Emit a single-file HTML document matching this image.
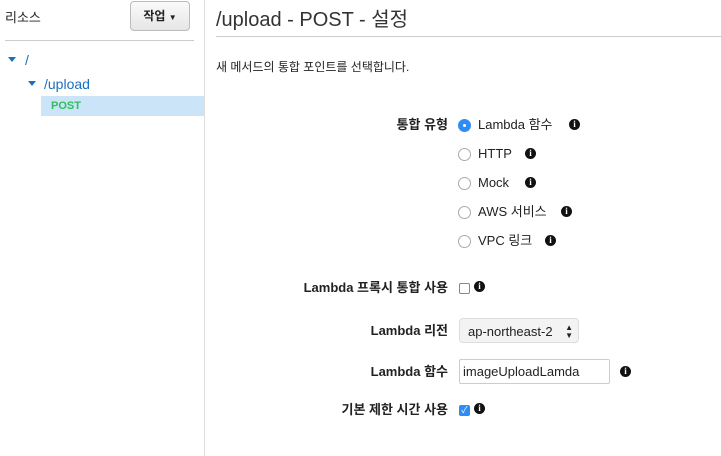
<!DOCTYPE html><html><head><meta charset="utf-8"><style>
body{margin:0;width:721px;height:456px;background:#fff;font-family:"Liberation Sans","Noto Sans CJK KR",sans-serif;color:#222;position:relative;overflow:hidden;font-size:13px;line-height:16px}
.a{position:absolute;white-space:nowrap;line-height:16px}
.lbl{position:absolute;right:273px;font-weight:bold;font-size:13px;line-height:16px;white-space:nowrap}
.r{position:absolute;width:11px;height:11px;border:1px solid #aaa;border-radius:50%;background:#fff;left:458px}
.i{position:absolute;width:11px;height:11px;border-radius:50%;background:#111;color:#fff;font:bold 9px/11px "Liberation Serif",serif;text-align:center}
.t{position:absolute;left:478px;font-size:13px;line-height:16px;white-space:nowrap}
</style></head><body>
<div class="a" style="left:204px;top:0;width:1px;height:456px;background:#ddd"></div>
<div class="a" style="left:5px;top:10px;font-size:13px">리소스</div>
<div class="a" style="left:130px;top:1px;width:58px;height:28px;border:1px solid #bbb;border-radius:4px;background:linear-gradient(#fafafa,#e6e6e6);font-size:12px;font-weight:bold;line-height:28px;text-align:center">작업 <span style="font-size:8px">▼</span></div>
<div class="a" style="left:5px;top:40px;width:189px;height:1px;background:#ccc"></div>
<div class="a" style="left:8px;top:57px;width:0;height:0;border-left:4px solid transparent;border-right:4px solid transparent;border-top:5px solid #1a6fbf"></div>
<div class="a" style="left:25px;top:52px;color:#1a6fbf;font-size:14px">/</div>
<div class="a" style="left:28px;top:81px;width:0;height:0;border-left:4px solid transparent;border-right:4px solid transparent;border-top:5px solid #1a6fbf"></div>
<div class="a" style="left:44px;top:76px;color:#1a6fbf;font-size:14px">/upload</div>
<div class="a" style="left:41px;top:96px;width:163px;height:20px;background:#cce4f7"></div>
<div class="a" style="left:51px;top:98px;color:#2ebf5a;font-weight:bold;font-size:11px">POST</div>
<div class="a" style="left:216px;top:8px;font-size:20px;line-height:24px;color:#333">/upload - POST - 설정</div>
<div class="a" style="left:216px;top:36px;width:505px;height:1px;background:#ccc"></div>
<div class="a" style="left:216px;top:59px;font-size:12px">새 메서드의 통합 포인트를 선택합니다.</div>
<div class="lbl" style="top:117px">통합 유형</div>
<div class="r" style="top:119px;background:#2f8cf5;border-color:#2f8cf5"><div style="width:3px;height:3px;background:#fff;border-radius:50%;margin:4px"></div></div>
<div class="t" style="top:117px">Lambda 함수</div><div class="i" style="left:569px;top:119px">i</div>
<div class="r" style="top:148px"></div><div class="t" style="top:146px">HTTP</div><div class="i" style="left:525px;top:148px">i</div>
<div class="r" style="top:177px"></div><div class="t" style="top:175px">Mock</div><div class="i" style="left:525px;top:177px">i</div>
<div class="r" style="top:206px"></div><div class="t" style="top:204px">AWS 서비스</div><div class="i" style="left:561px;top:206px">i</div>
<div class="r" style="top:235px"></div><div class="t" style="top:233px">VPC 링크</div><div class="i" style="left:545px;top:235px">i</div>
<div class="lbl" style="top:280px">Lambda 프록시 통합 사용</div>
<div class="a" style="left:459px;top:283px;width:9px;height:9px;border:1px solid #888;border-radius:2px"></div>
<div class="i" style="left:474px;top:281px">i</div>
<div class="lbl" style="top:323px">Lambda 리전</div>
<div class="a" style="left:459px;top:318px;width:120px;height:25px;border:1px solid #ddd;border-radius:4px;background:#f3f3f3;line-height:25px;font-size:13px;box-sizing:border-box;padding-left:8px">ap-northeast-2<span style="position:absolute;right:5px;top:0;font-size:8px;line-height:8px;padding-top:5px">▲<br>▼</span></div>
<div class="lbl" style="top:364px">Lambda 함수</div>
<div class="a" style="left:459px;top:359px;width:151px;height:25px;border:1px solid #ccc;border-radius:2px;box-sizing:border-box;line-height:23px;padding-left:3px;font-size:13px">imageUploadLamda</div>
<div class="i" style="left:620px;top:366px">i</div>
<div class="lbl" style="top:402px">기본 제한 시간 사용</div>
<div class="a" style="left:459px;top:405px;width:11px;height:11px;background:#2f8cf5;border-radius:2px;color:#fff;font-size:9px;line-height:11px;text-align:center">✓</div>
<div class="i" style="left:474px;top:403px">i</div>
</body></html>
